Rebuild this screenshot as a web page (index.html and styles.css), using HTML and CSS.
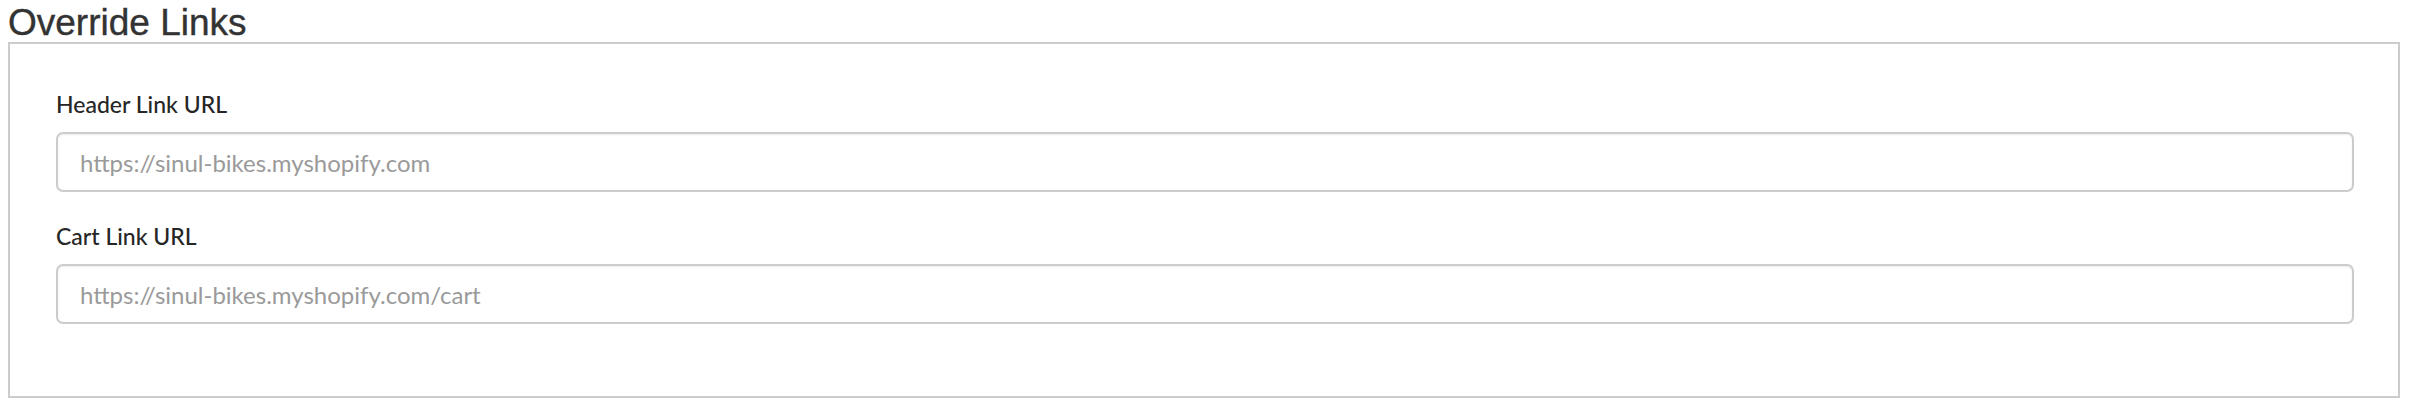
FILE: index.html
```html
<!DOCTYPE html>
<html lang="en">
<head>
<meta charset="utf-8">
<title>Override Links</title>
<link rel="stylesheet" href="styles.css">
</head>
<body>
<div class="page">
  <h2 class="section-title">Override Links</h2>
  <div class="panel">
    <div class="form-group">
      <label class="field-label" for="header-link">Header Link URL</label>
      <input class="field-input" id="header-link" type="text" placeholder="https://sinul-bikes.myshopify.com">
    </div>
    <div class="form-group">
      <label class="field-label" for="cart-link">Cart Link URL</label>
      <input class="field-input" id="cart-link" type="text" placeholder="https://sinul-bikes.myshopify.com/cart">
    </div>
  </div>
</div>
</body>
</html>
```

FILE: styles.css
```css
html, body {
  margin: 0;
  padding: 0;
  background: #ffffff;
}

.page {
  padding: 4px 10px 0 8px;
}

.section-title {
  margin: 0;
  font-family: "Liberation Sans", Arial, sans-serif;
  font-size: 37px;
  font-weight: 400;
  line-height: 38px;
  color: #333333;
  -webkit-text-stroke: 0.4px #333333;
}

.panel {
  border: 2px solid #cccccc;
  padding: 45px 44px 72px 46px;
  display: flex;
  flex-direction: column;
  gap: 29px;
}

.form-group {
  display: flex;
  flex-direction: column;
}

.field-label {
  display: block;
  font-family: Lato, "Noto Sans", sans-serif;
  font-size: 23px;
  font-weight: 500;
  line-height: 30px;
  color: #262626;
  margin-bottom: 13px;
}

.field-input {
  box-sizing: border-box;
  height: 60px;
  width: 100%;
  margin: 0;
  padding: 0 22px;
  border: 2px solid #cccccc;
  border-radius: 7px;
  background: #ffffff;
  box-shadow: inset 0 1px 2px rgba(0, 0, 0, 0.08);
  font-family: Lato, "Noto Sans", sans-serif;
  font-size: 24px;
  font-weight: 400;
  color: #555555;
  outline: none;
}

.field-input::placeholder {
  color: #9a9a9a;
  opacity: 1;
}
```
